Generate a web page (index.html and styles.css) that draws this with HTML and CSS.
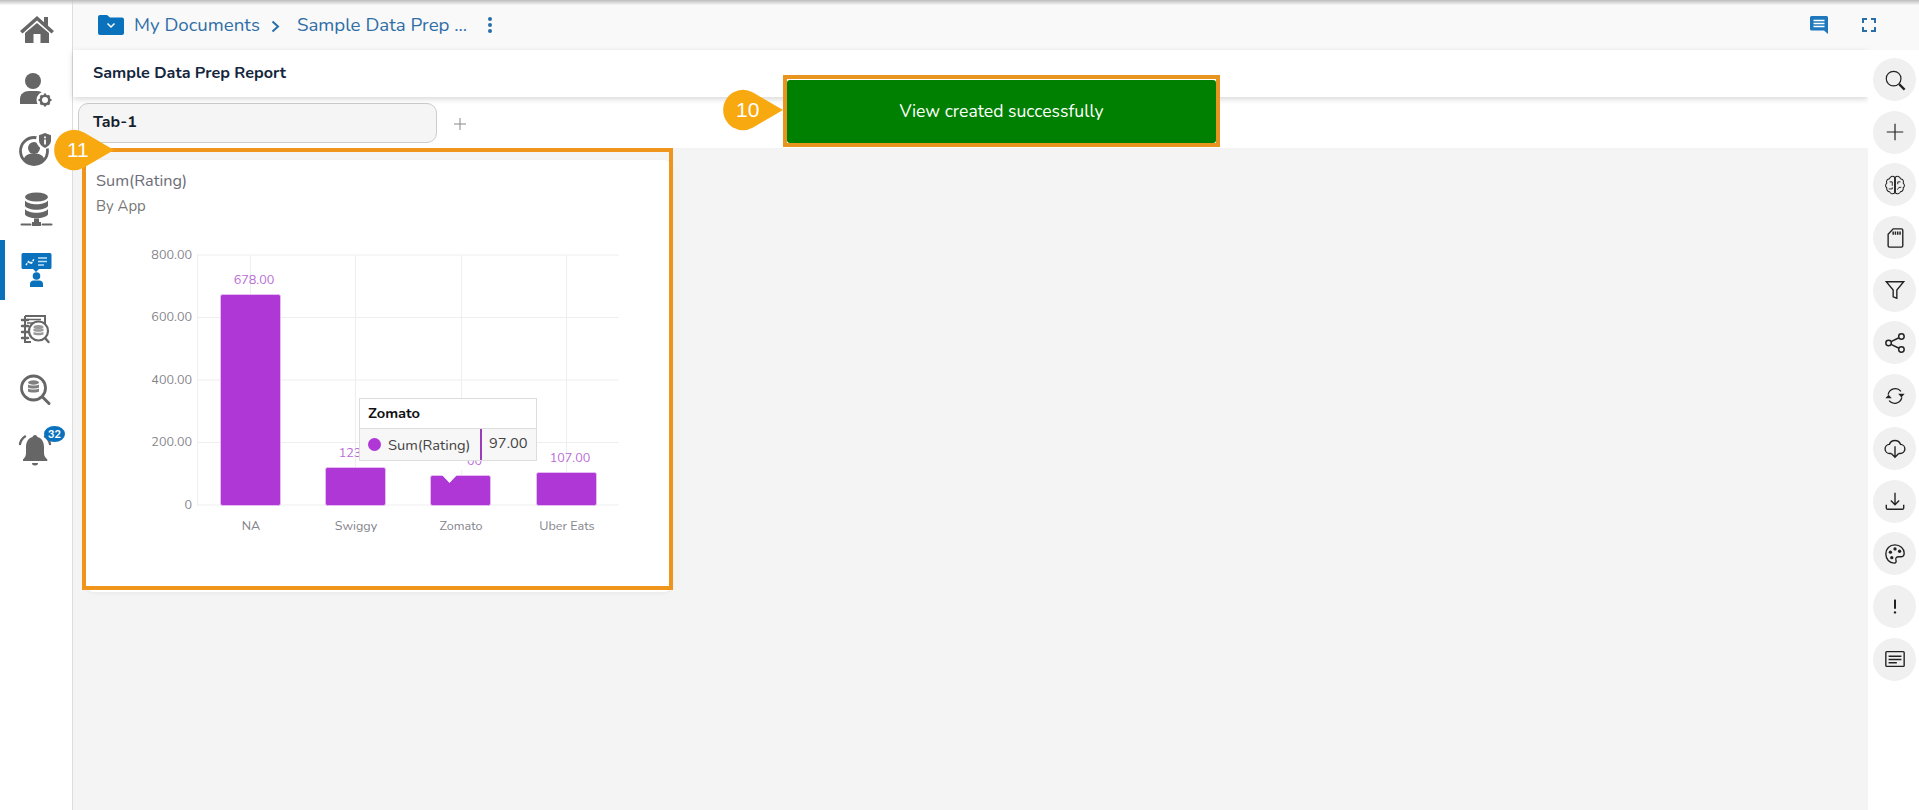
FILE: index.html
```html
<!DOCTYPE html>
<html lang="en">
<head>
<meta charset="utf-8">
<title>Sample Data Prep Report</title>
<link rel="stylesheet" href="styles.css">
</head>
<body>
<div class="shell">
  <nav class="sidebar">
    <div class="nav-item"><svg class="nav-icon" viewBox="0 0 72 60"><path d="M37 16 20 31l2.500 2.500L37 20.500l14.500 13L54 31l-6-5.300V17h-4v5.200z"/><path d="M25 33 37 23l12 10v10h-8.500v-9h-7v9H25z"/></svg></div>
    <div class="nav-item"><svg class="nav-icon" viewBox="0 0 72 60"><circle cx="33" cy="21" r="8"/><path d="M20 44v-5c0-5 4-8 9-8h8c3 0 5 1 6 2l-5 11z"/><circle cx="45" cy="40" r="8.500" fill="#fff"/><circle cx="45" cy="40" r="4.300" fill="none" stroke="#666" stroke-width="2.600"/><path d="M45 33.500v3M45 43.500v3M38.500 40h3M48.500 40h3M40.500 35.500l2 2M47.500 42.500l2 2M49.500 35.500l-2 2M42.500 42.500l-2 2" stroke="#666" stroke-width="2.200"/></svg></div>
    <div class="nav-item"><svg class="nav-icon" viewBox="0 0 72 60"><circle cx="34" cy="31" r="13.500" fill="none" stroke="#666" stroke-width="2.800"/><circle cx="34" cy="28" r="6"/><path d="M23.500 40c1-5 5-6.500 10.500-6.500S43.500 35 44.500 40c-6 5-15 5-21 0z"/><circle cx="45" cy="20" r="9" fill="#fff"/><path d="M45 13l6 2.200v5c0 3.500-2.500 6-6 7.800-3.500-1.800-6-4.300-6-7.800v-5z"/><path d="M45 16.500v1.800M45 19.500v5" stroke="#fff" stroke-width="1.800"/></svg></div>
    <div class="nav-item"><svg class="nav-icon" viewBox="0 0 72 60"><ellipse cx="36.500" cy="17" rx="11.500" ry="4.500"/><path d="M25 20.500c2 2.500 6.500 3.700 11.500 3.700S46 23 48 20.500V26c-2 2.500-6.500 3.700-11.500 3.700S27 28.500 25 26z"/><path d="M25 29c2 2.500 6.500 3.700 11.500 3.700S46 31.500 48 29v5.500c-2 2.500-6.500 3.700-11.500 3.700S27 37 25 34.500z"/><path d="M34 38.500h5V42h2v4h-9v-4h2z"/><path d="M21.500 44.500h9M42.500 44.500h9" stroke="#666" stroke-width="2" stroke-linecap="round"/></svg></div>
    <div class="nav-item active"><svg class="nav-icon blue" viewBox="0 0 72 60"><path d="M23 13h27a1.500 1.500 0 0 1 1.500 1.500v13a1.500 1.500 0 0 1-1.500 1.500H39l-3 3-3-3H23a1.500 1.500 0 0 1-1.500-1.500v-13A1.500 1.500 0 0 1 23 13z"/><path d="M26 25l3-4 2 3 3-5" fill="none" stroke="#fff" stroke-width="1.500" stroke-dasharray="2 1"/><path d="M38 18h9M38 21.500h9M38 25h6" stroke="#bfe0f5" stroke-width="1.300"/><circle cx="36.500" cy="36" r="3.800"/><path d="M30 47v-3c0-2 1.500-3.500 3.500-3.500h6c2 0 3.500 1.500 3.500 3.500v3z"/></svg></div>
    <div class="nav-item"><svg class="nav-icon" viewBox="0 0 72 60"><path d="M25 16h20v9" fill="none" stroke="#666" stroke-width="2"/><path d="M25 16v26h6" fill="none" stroke="#666" stroke-width="2"/><path d="M22 20h6M22 26h6M22 32h6M22 38h6" stroke="#666" stroke-width="2.400" stroke-linecap="round"/><path d="M27 19.500h14M27 23h10" stroke="#666" stroke-width="1.500"/><circle cx="38.500" cy="31" r="9.500" fill="#fff" stroke="#666" stroke-width="2.200"/><ellipse cx="38.500" cy="27" rx="5" ry="2" fill="#999"/><path d="M33.500 28.500c1 1 9 1 10 0v2.500c-1 1-9 1-10 0zM33.500 32c1 1 9 1 10 0v2.500c-1 1-9 1-10 0z" fill="#999"/><path d="M45 38l3.500 4" stroke="#666" stroke-width="2.400" stroke-linecap="round"/></svg></div>
    <div class="nav-item"><svg class="nav-icon" viewBox="0 0 72 60"><circle cx="33.500" cy="28" r="12" fill="none" stroke="#666" stroke-width="2.800"/><ellipse cx="33.500" cy="22.500" rx="5.500" ry="2.200" fill="#808080"/><path d="M28 24.500c1.500 1.300 9.500 1.300 11 0v3c-1.500 1.300-9.500 1.300-11 0zM28 28.500c1.500 1.300 9.500 1.300 11 0v3c-1.500 1.300-9.500 1.300-11 0z" fill="#808080"/><path d="M42.500 37l6.500 6.500" stroke="#666" stroke-width="3" stroke-linecap="round"/></svg></div>
    <div class="nav-item"><svg class="nav-icon" viewBox="0 0 72 60"><path d="M35 15c1.500 0 2.200 1 2.400 2 4.400 1.200 6.600 5 6.600 10v6c0 3 1.500 4.500 3.300 6.500v1.500H23v-1.500C24.800 37.500 26 36 26 33v-6c0-5 2.300-8.800 6.600-10 .2-1 .9-2 2.400-2z"/><path d="M32 43h6a3 2.500 0 0 1-6 0z"/><path d="M25 16.500c-3 2-4.500 4.500-5 7.500M45 16.500c3 2 4.500 4.500 5 7.500" fill="none" stroke="#666" stroke-width="2.400" stroke-linecap="round"/></svg><span class="count">32</span></div>
  </nav>
  <div class="main">
    <header class="topbar">
      <svg class="folder" viewBox="0 0 26 20"><path d="M2 0h7l3 2.500h12a2 2 0 0 1 2 2V18a2 2 0 0 1-2 2H2a2 2 0 0 1-2-2V2a2 2 0 0 1 2-2z"/><path d="M9.500 8.500l3.500 3.500 3.500-3.500" fill="none" stroke="#fff" stroke-width="1.500"/></svg>
      <span class="crumb">My Documents</span>
      <svg class="chev" viewBox="0 0 9 13"><path d="M1.500 1.500 7 6.500l-5.500 5" fill="none" stroke="#2a6ea8" stroke-width="2"/></svg>
      <span class="crumb second">Sample Data Prep ...</span>
      <svg class="dots" viewBox="0 0 6 18"><circle cx="3" cy="3" r="2"/><circle cx="3" cy="9" r="2"/><circle cx="3" cy="15" r="2"/></svg>
      <span class="spacer"></span>
      <svg class="comment" viewBox="0 0 18 18"><path d="M1.500 0h15A1.500 1.500 0 0 1 18 1.500V18l-4-3.500H1.500A1.500 1.500 0 0 1 0 13V1.500A1.500 1.500 0 0 1 1.500 0z"/><path d="M3.500 4.500h11M3.500 7.500h11M3.500 10.500h11" stroke="#fff" stroke-width="1.500"/></svg>
      <svg class="expand" viewBox="0 0 14 14"><path d="M1 5V1h4M9 1h4v4M13 9v4H9M5 13H1V9" fill="none" stroke="#2a6ea8" stroke-width="2"/></svg>
    </header>
    <div class="below">
      <div class="work">
        <div class="titlebar">Sample Data Prep Report</div>
        <div class="tabs">
          <div class="tab">Tab-1</div>
          <svg class="addtab" viewBox="0 0 12 12"><path d="M6 0v12M0 6h12" stroke="#888" stroke-width="1"/></svg>
        </div>
        <div class="canvas">
          <section class="card">
            <div class="card-head">
              <div class="card-title">Sum(Rating)</div>
              <div class="card-sub">By App</div>
            </div>
            <svg class="chart" viewBox="86 220 586 372">
              <g class="grid">
                <path d="M197 255H619M197 317.500H619M197 380H619M197 442.500H619M197 505H619"/>
                <path d="M197.500 255V505M250.500 255V505M355.500 255V505M461.500 255V505M566.500 255V505"/>
              </g>
              <g class="ylab">
                <text x="192" y="259">800.00</text>
                <text x="192" y="321">600.00</text>
                <text x="192" y="384">400.00</text>
                <text x="192" y="446">200.00</text>
                <text x="192" y="509">0</text>
              </g>
              <g class="bars">
                <rect x="220.500" y="294.500" width="60" height="211" rx="2"/>
                <rect x="325.500" y="467.500" width="60" height="38" rx="2"/>
                <rect x="430.500" y="475.500" width="60" height="30" rx="2"/>
                <rect x="536.500" y="472.500" width="60" height="33" rx="2"/>
              </g>
              <g class="vals">
                <text x="254" y="284">678.00</text>
                <text x="359" y="457">123.00</text>
                <text x="465.500" y="465">97.00</text>
                <text x="570" y="462">107.00</text>
              </g>
              <g class="xlab">
                <text x="251" y="530">NA</text>
                <text x="356" y="530">Swiggy</text>
                <text x="461" y="530">Zomato</text>
                <text x="567" y="530">Uber Eats</text>
              </g>
              <path class="notch" d="M441 474h17l-8.500 9zM440 460h27v10h-27z"/>
            </svg>
            <div class="tooltip">
              <div class="tip-head">Zomato</div>
              <div class="tip-row">
                <span class="tip-dot"></span>
                <span class="tip-name">Sum(Rating)</span>
                <span class="tip-val">97.00</span>
              </div>
            </div>
          </section>
        </div>
      </div>
      <aside class="rail">
        <div class="rbtn"><svg viewBox="0 0 24 24"><circle cx="10.500" cy="10.500" r="8"/><path d="M16.500 16.500l6 6" stroke-width="2.400"/></svg></div>
        <div class="rbtn"><svg viewBox="0 0 24 24"><path d="M12 3v18M3 12h18"/></svg></div>
        <div class="rbtn"><svg viewBox="0 0 28 28"><path d="M13.500 4c-2-2-6-1-6.500 2-3 .5-4.500 3-3.500 5.500C1.500 13.500 1.500 16 3.500 17.500c-.5 3 1.500 5 3.500 5 1 3 5 3.500 6.500 1.500zM14.500 4c2-2 6-1 6.500 2 3 .5 4.500 3 3.500 5.500 2 2 2 4.500 0 6 .5 3-1.500 5-3.500 5-1 3-5 3.500-6.500 1.500z" stroke-width="1.300"/><path d="M14 8v15M7 10h3.500v5M6 19h4.500v-2M21 10h-3.500v3M22 17h-3l-2 3" stroke-width="1.200"/></svg></div>
        <div class="rbtn"><svg viewBox="0 0 24 24"><path d="M10 2h9a1.500 1.500 0 0 1 1.500 1.500v17A1.500 1.500 0 0 1 19 22H6a1.500 1.500 0 0 1-1.500-1.500V8z" stroke-width="1.500"/><path d="M10 5v3.500M12.500 5v3.500M15 5v3.500M17.500 5v3.500" stroke-width="1.600"/></svg></div>
        <div class="rbtn"><svg viewBox="0 0 24 24"><path d="M2.500 3h19l-7.500 9v9l-4-1.500V12z" stroke-width="1.500"/></svg></div>
        <div class="rbtn"><svg viewBox="0 0 24 24"><circle cx="5" cy="12" r="3" stroke-width="1.600"/><circle cx="19" cy="5" r="3" stroke-width="1.600"/><circle cx="19" cy="19" r="3" stroke-width="1.600"/><path d="M7.700 10.600l8.600-4.300M7.700 13.400l8.600 4.300" stroke-width="1.600"/></svg></div>
        <div class="rbtn"><svg viewBox="0 0 24 24"><path d="M4.500 10.500a8 8 0 0 1 14-3.500M19.500 13.500a8 8 0 0 1-14 3.500" stroke-width="1.400"/><path class="solid" d="M15.500 9.500h7l-3.500 4zM8.500 14.500h-7l3.500-4z"/></svg></div>
        <div class="rbtn"><svg viewBox="0 0 24 24"><path d="M8 18H6.500a5 5 0 0 1-.6-10A6.500 6.500 0 0 1 18 8a5 5 0 0 1-.5 10H16" stroke-width="1.500"/><path d="M12 10v12M8 18l4 4 4-4" stroke-width="1.500"/></svg></div>
        <div class="rbtn"><svg viewBox="0 0 24 24"><path d="M12 3v13M7.500 11.500L12 16l4.500-4.500" stroke-width="1.500"/><path d="M2.500 16v3.500a1.500 1.500 0 0 0 1.500 1.500h16a1.500 1.500 0 0 0 1.500-1.500V16" stroke-width="1.500"/></svg></div>
        <div class="rbtn"><svg viewBox="0 0 24 24"><path d="M12 2C6 2 2 6.500 2 12s4 10 9 10c2.500 0 2.500-2 2-3.500-.5-2 .5-3.500 3-3.500h3c2 0 3-1.500 3-4 0-5-4.500-9-10-9z" stroke-width="1.500"/><circle class="solid" cx="7" cy="10" r="1.800"/><circle class="solid" cx="12" cy="6.500" r="1.800"/><circle class="solid" cx="17" cy="9" r="1.800"/><circle class="solid" cx="8.500" cy="16" r="1.800"/></svg></div>
        <div class="rbtn"><svg viewBox="0 0 24 24"><path d="M12 5v10" stroke-width="2.200"/><circle class="solid" cx="12" cy="19" r="1.300"/></svg></div>
        <div class="rbtn"><svg viewBox="0 0 24 24"><rect x="2" y="4" width="20" height="16" rx="1" stroke-width="1.500"/><path d="M5 9h14M5 12.500h14M5 16h9" stroke-width="1.600"/></svg></div>
      </aside>
    </div>
  </div>
</div>
<div class="topshade"></div>
<div class="toast"><div class="toast-body">View created successfully</div></div>
<div class="outline card-outline"></div>
<svg class="marker marker-10" viewBox="0 0 62 42"><path d="M61 21 31 38.500Q21 44 11 38.500A20.500 20.500 0 0 1 11 3.500Q21-2 31 3.500z"/><text x="14" y="28">10</text></svg>
<svg class="marker marker-11" viewBox="0 0 62 42"><path d="M61 21 31 38.500Q21 44 11 38.500A20.500 20.500 0 0 1 11 3.500Q21-2 31 3.500z"/><text x="14" y="28">11</text></svg>
</body>
</html>
```
FILE: styles.css
```css
* { box-sizing: border-box; }
html, body { margin: 0; height: 100%; }
body {
  height: 810px;
  overflow: hidden;
  position: relative;
  background: #fff;
  font-family: "Nunito", "Lato", "Open Sans", sans-serif;
  color: #222;
}
.shell { display: flex; height: 810px; }
.topshade {
  position: absolute; left: 0; right: 0; top: 0; height: 5px;
  background: linear-gradient(#bdbdbd, rgba(235,235,235,.2));
}
.sidebar {
  width: 73px; flex: none; background: #fff;
  border-right: 1px solid #ddd;
  display: flex; flex-direction: column;
}
.nav-item { height: 60px; position: relative; flex: none; }
.nav-item.active { box-shadow: inset 5px 0 0 #0a72bd; }
.nav-icon { width: 72px; height: 60px; display: block; fill: #666; }
.nav-icon.blue { fill: #0a72bd; }
.count {
  position: absolute; left: 44px; top: 6px; width: 21px; height: 16px;
  border-radius: 50%; background: #0a72bd; color: #fff;
  font: 700 11px/16px "Lato", sans-serif; text-align: center;
}
.main { flex: 1; min-width: 0; display: flex; flex-direction: column; }
.topbar {
  height: 50px; flex: none; background: #f9f9fa;
  display: flex; align-items: center; padding: 3px 43px 0 25px;
}
.folder { width: 26px; height: 20px; fill: #0a72bd; flex: none; margin-top: -3px; }
.crumb { font-size: 18.700px; color: #2f6ea5; margin-left: 10px; margin-top: -4px; }
.chev { width: 9px; height: 13px; margin-left: 11px; flex: none; margin-top: -1px; }
.crumb.second { margin-left: 17px; }
.dots { width: 6px; height: 18px; fill: #2a6ea8; margin-left: 20px; flex: none; margin-top: -3px; }
.spacer { flex: 1; }
.comment { width: 18px; height: 18px; fill: #1f78bd; flex: none; margin-top: -3px; }
.expand { width: 14px; height: 14px; margin-left: 34px; flex: none; margin-top: -3px; }
.below { flex: 1; display: flex; min-height: 0; }
.work { flex: 1; min-width: 0; display: flex; flex-direction: column; }
.titlebar {
  height: 47px; flex: none; background: #fff; padding: 0 20px 2px;
  display: flex; align-items: center;
  font-size: 16.200px; font-weight: 700; color: #14263c;
  box-shadow: 0 2px 6px rgba(0,0,0,.16); position: relative;
}
.tabs { height: 51px; flex: none; background: #fff; display: flex; align-items: flex-start; padding: 6px 0 0 5px; }
.tab {
  width: 359px; height: 40px; border: 1px solid #ccc; border-radius: 10px;
  background: #f5f5f5; padding: 0 14px; line-height: 36px;
  font-size: 16px; font-weight: 700; color: #14202e;
}
.addtab { width: 12px; height: 12px; margin: 15px 0 0 17px; flex: none; }
.canvas { flex: 1; background: #f4f4f4; padding: 12px 13px; position: relative; }
.card {
  width: 586px; height: 432px; background: #fff; border-radius: 8px; position: relative;
  box-shadow: 0 1px 4px rgba(0,0,0,.05);
}
.card-head { height: 60px; padding: 11px 10px 0; color: #6d6d78; }
.card-title { font-size: 16.300px; line-height: 20px; }
.card-sub { font-size: 14.900px; line-height: 20px; margin-top: 5px; color: #777; }
.chart { width: 586px; height: 372px; display: block; font-size: 12.600px; }
.grid path { fill: none; stroke: #eee; stroke-width: 1; }
.ylab text { text-anchor: end; fill: #85858c; }
.xlab text { text-anchor: middle; fill: #85858c; }
.vals text { text-anchor: middle; fill: #b96bd6; }
.bars rect { fill: #ae37d5; stroke: #e5bdf2; stroke-width: 1; }
.notch { fill: #fff; }
.tooltip {
  position: absolute; left: 273px; top: 238px; width: 178px; height: 63px;
  border: 1px solid #ddd; background: #fff; font-size: 14.700px;
}
.tip-head { height: 30px; padding-left: 8px; line-height: 28px; font-weight: 700; color: #111; border-bottom: 1px solid #ddd; }
.tip-row { height: 31px; background: #f7f7f7; display: flex; align-items: center; padding-left: 8px; color: #444; }
.tip-dot { width: 13px; height: 13px; border-radius: 50%; background: #ae37d5; flex: none; }
.tip-name { margin-left: 7px; width: 92px; flex: none; white-space: nowrap; }
.tip-val { border-left: 2px solid #9a3db8; height: 100%; padding-left: 7px; line-height: 29px; }
.rail {
  width: 51px; flex: none; background: #fff; padding: 8px 0 0 5px;
  display: flex; flex-direction: column; gap: 9.700px; position: relative;
}
.rbtn { width: 43px; height: 43px; border-radius: 50%; background: #f0f0f0; display: flex; align-items: center; justify-content: center; flex: none; }
.rbtn svg { width: 22px; height: 22px; fill: none; stroke: #222; stroke-width: 1.300; }
.rbtn svg .solid { fill: #222; stroke: none; }
.toast {
  position: absolute; left: 783px; top: 75px; width: 437px; height: 72px;
  border: 4px solid #e8951f; background: #fff; padding-top: 1px;
}
.toast-body {
  height: 63px; border-radius: 3px; background: #008000;
  color: #fff; font-size: 17.600px; text-align: center; line-height: 63px;
}
.outline { position: absolute; border: 4px solid #f0951b; pointer-events: none; }
.card-outline { left: 82px; top: 148px; width: 591px; height: 442px; }
.marker { position: absolute; width: 62px; height: 42px; }
.marker path { fill: #f7a90f; }
.marker text { fill: #fff; font-family: "Liberation Sans", sans-serif; font-size: 21px; }
.marker-10 { left: 722px; top: 89px; }
.marker-11 { left: 53px; top: 129px; }
```
